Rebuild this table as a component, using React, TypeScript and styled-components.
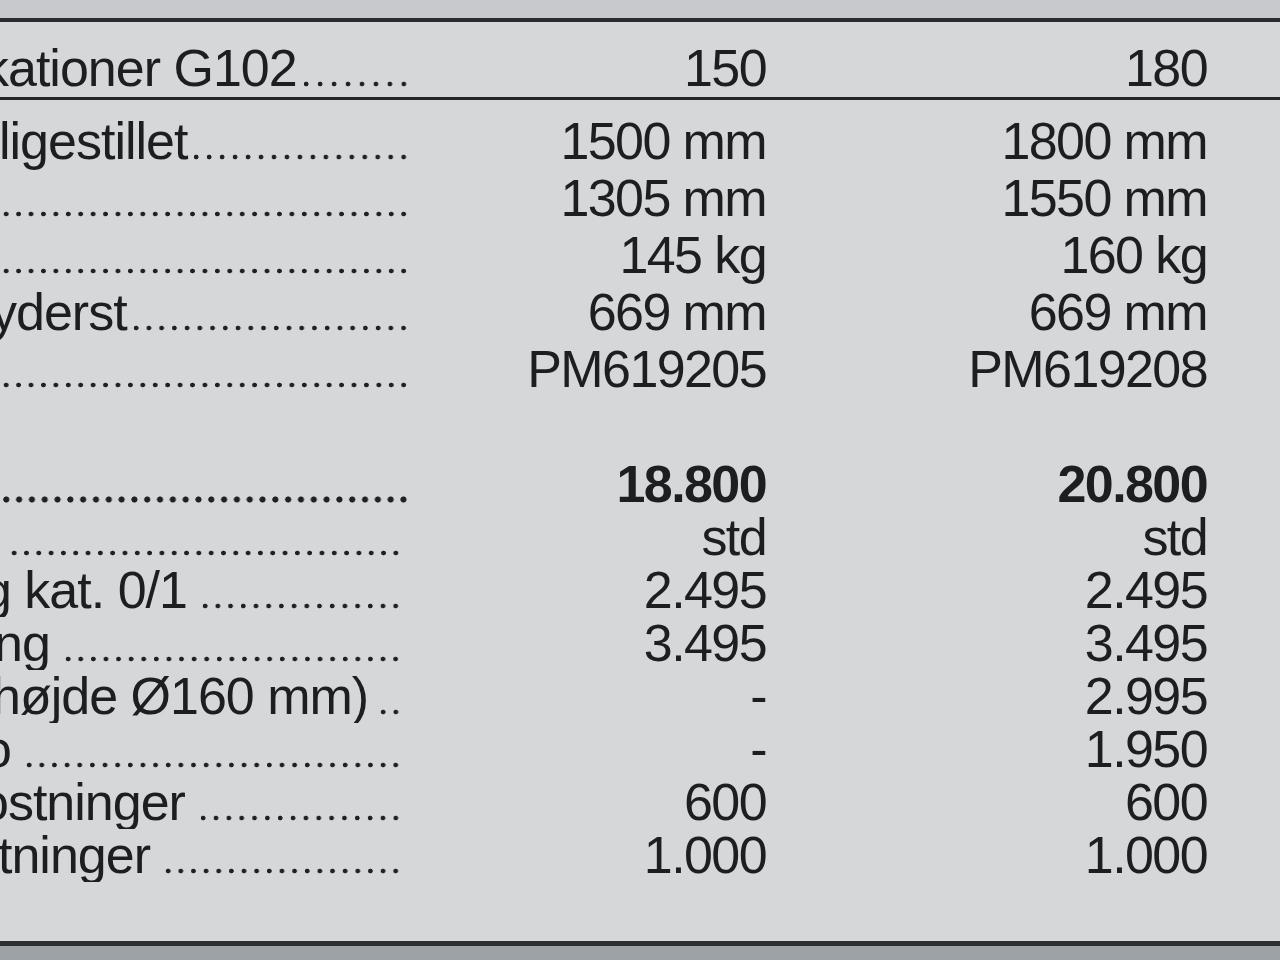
import React from "react";
import styled, { createGlobalStyle } from "styled-components";

const Global = createGlobalStyle`
  html, body { margin: 0; padding: 0; background: #d6d7d9; }
  body { font-family: "Liberation Sans", Arial, sans-serif; }
`;

const Page = styled.div`
  width: 1280px;
  height: 960px;
  display: flex;
  flex-direction: column;
  overflow: hidden;
  color: #1d1e20;
  font-family: "Liberation Sans", Arial, sans-serif;
`;

const TopStrip = styled.div`
  height: 18px;
  flex: none;
  background: #c7c9cc;
`;

const BottomStrip = styled.div`
  flex: 1;
  background: #9ca2a5;
`;

const Panel = styled.section`
  flex: none;
  height: 928px;
  box-sizing: border-box;
  background: #d6d7d9;
  border-top: 4px solid #2a2d30;
  border-bottom: 5px solid #2c2f32;
  display: flex;
  flex-direction: column;
`;

const Row = styled.div<{ $h: number; $header?: boolean }>`
  display: grid;
  grid-template-columns: 410px 356px 441px;
  height: ${(p) => p.$h}px;
  flex: none;
  box-sizing: border-box;
  font-size: 52px;
  line-height: 52px;
  letter-spacing: -1.6px;
  ${(p) =>
    p.$header &&
    `padding-top: 20px; border-bottom: 3px solid #232528;`}
`;

const Body = styled.div`
  display: flex;
  flex-direction: column;
  padding-top: 15px;
`;

const Label = styled.div<{ $end: number }>`
  display: flex;
  align-items: flex-start;
  overflow: hidden;
  white-space: nowrap;
  padding-right: ${(p) => p.$end}px;
`;

const LabelText = styled.span<{ $shift: number }>`
  flex: none;
  letter-spacing: -1px;
  margin-left: ${(p) => p.$shift}px;
`;

const Leader = styled.span<{ $gap: number; $bold?: boolean }>`
  flex: 1;
  min-width: 0;
  margin-left: ${(p) => p.$gap}px;
  margin-top: ${(p) => (p.$bold ? 38 : 39)}px;
  height: ${(p) => (p.$bold ? 7 : 6)}px;
  background-image: radial-gradient(
    circle,
    #1f2022 ${(p) => (p.$bold ? 2.7 : 2.0)}px,
    transparent ${(p) => (p.$bold ? 3.4 : 2.7)}px
  );
  background-size: ${(p) => (p.$bold ? 12.6 : 12.3)}px 100%;
  background-position: right center;
  background-repeat: space no-repeat;
`;

const Value = styled.div<{ $bold?: boolean }>`
  text-align: right;
  white-space: nowrap;
  font-weight: ${(p) => (p.$bold ? 700 : 400)};
`;

type Spec = {
  label: string;
  shift: number;
  a: string;
  b: string;
  bold?: boolean;
  lead?: number;
  gap?: number;
};

const groupA: Spec[] = [
  { label: "ligestillet", shift: -1, a: "1500 mm", b: "1800 mm" },
  { label: "", shift: 0, a: "1305 mm", b: "1550 mm" },
  { label: "", shift: 0, a: "145 kg", b: "160 kg" },
  { label: "yderst", shift: -9, a: "669 mm", b: "669 mm" },
  { label: "", shift: 0, a: "PM619205", b: "PM619208" },
];

const groupB: Spec[] = [
  { label: "", shift: 0, a: "18.800", b: "20.800", bold: true },
  { label: "", shift: 0, a: "std", b: "std", lead: 8 },
  { label: "g kat. 0/1", shift: -17, a: "2.495", b: "2.495" },
  { label: "ng", shift: -6, a: "3.495", b: "3.495" },
  { label: "højde Ø160 mm)", shift: -8, a: "-", b: "2.995", gap: 9 },
  { label: "o", shift: -17, a: "-", b: "1.950" },
  { label: "ostninger", shift: -20, a: "600", b: "600" },
  { label: "tninger", shift: -2, a: "1.000", b: "1.000" },
];

export default function App() {
  return (
    <Page>
      <Global />
      <TopStrip />
      <Panel>
        <Row $h={78} $header>
          <Label $end={0}>
            <LabelText $shift={-17}>kationer G102</LabelText>
            <Leader $gap={3} />
          </Label>
          <Value>150</Value>
          <Value>180</Value>
        </Row>
        <Body>
          {groupA.map((r, i) => (
            <Row key={"a" + i} $h={57}>
              <Label $end={0}>
                {r.label && <LabelText $shift={r.shift}>{r.label}</LabelText>}
                <Leader $gap={r.label ? 3 : 0} />
              </Label>
              <Value>{r.a}</Value>
              <Value>{r.b}</Value>
            </Row>
          ))}
          <Row $h={58} />
          {groupB.map((r, i) => (
            <Row key={"b" + i} $h={53}>
              <Label $end={r.bold ? 0 : 8}>
                {r.label && <LabelText $shift={r.shift}>{r.label}</LabelText>}
                <Leader
                  $gap={r.label ? r.gap ?? 12 : r.lead ?? 0}
                  $bold={r.bold}
                />
              </Label>
              <Value $bold={r.bold}>{r.a}</Value>
              <Value $bold={r.bold}>{r.b}</Value>
            </Row>
          ))}
        </Body>
      </Panel>
      <BottomStrip />
    </Page>
  );
}
